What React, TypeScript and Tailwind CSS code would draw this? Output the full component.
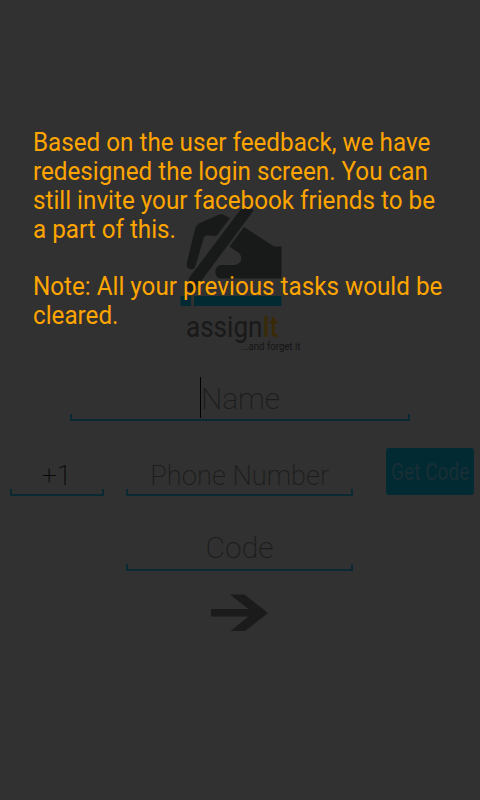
import type { ReactNode } from "react";

const notice = [
  "Based on the user feedback, we have",
  "redesigned the login screen. You can",
  "still invite your facebook friends to be",
  "a part of this.",
  "",
  "Note: All your previous tasks would be",
  "cleared.",
];

function Field({ className, children }: { className: string; children: ReactNode }) {
  return (
    <div className={`relative flex justify-center whitespace-nowrap ${className}`}>
      {children}
      <div className="absolute inset-x-0 bottom-0 h-[7px] border-x-2 border-b-2 border-[#0b2932]" />
    </div>
  );
}

function Logo() {
  return (
    <div className="ml-[180px] h-[152px] w-[124px]">
      <svg className="block h-[107px] w-[102px]" viewBox="180 200 102 107">
        <g fill="#181a19">
          <path d="M230 218 L223 214.5 Q221 213.8 218 215 L199 223.5 Q196 225 195 229 L187 262 Q186 268 190 269 Q194 270 195.500 266 L204 237 Q205 235.500 207 235.500 L216.500 236 Z" />
          <path d="M244 205 L254 210 L193 292 L187 291 L189 278 Z" />
          <path d="M244 227 L274 246.500 H281.500 V278.500 H221 C213 278 214 265 221 265 H233 C243 265 244 255 236 251 L229.500 246.500 Z" />
        </g>
        <path d="M180.500 296 H191 V306 H180.500 Z M194 296 H281.500 V306 H194 Z" fill="#022a33" />
      </svg>
      <div className="ml-[6px] mt-[3px] h-[31px] w-[104px] origin-left scale-x-[0.868] whitespace-nowrap text-[30px] leading-[34px] text-[#191919]">
        assign<span className="font-medium text-[#3a2a08]">It</span>
      </div>
      <div className="ml-[61px] h-[11px] w-[62px] origin-left scale-x-[0.96] whitespace-nowrap text-[10px] leading-[11px] text-[#151515]">...and forget it</div>
    </div>
  );
}

export default function App() {
  return (
    <main className="relative h-[800px] w-[480px] overflow-hidden bg-[#313131] pt-[200px] font-['Roboto',sans-serif]">
      <Logo />
      <div className="mt-[24px] flex justify-center">
        <Field className="h-[45px] w-[340px] text-[30px] font-extralight leading-[46px] text-[#1c1c1c]">
          <span className="mt-px h-[41px] w-px bg-black" />
          <span>Name</span>
        </Field>
      </div>
      <div className="mt-[26px] flex h-[49px] items-end pl-[10px]">
        <Field className="h-[49px] w-[94px] text-[28px] font-extralight leading-[58px] text-[#080808]">
          <span className="scale-x-[0.95]">+1</span>
        </Field>
        <Field className="ml-[22px] h-[49px] w-[227px] text-[28px] font-extralight leading-[58px] text-[#1c1c1c]">
          <span className="scale-x-[0.975]">Phone Number</span>
        </Field>
        <button className="mb-px ml-[33px] flex h-[47px] w-[88px] items-center justify-center whitespace-nowrap rounded-[3px] bg-[#022a33] pt-[3px] text-[23px] text-[#192f35]">
          <span className="scale-x-[0.83]">Get Code</span>
        </button>
      </div>
      <div className="mt-[26px] flex justify-center pr-[1px]">
        <Field className="h-[49px] w-[227px] text-[30px] font-extralight leading-[52px] text-[#1c1c1c]">Code</Field>
      </div>
      <svg className="ml-[211px] mt-[23px] block h-[38px] w-[58px]" viewBox="211 594 58 38">
        <path d="M211 609 H248.500 L230 594.500 H244.500 L268 613 L245 631 H230.500 L248.500 616.500 H211 Z" fill="#1b1b1b" />
      </svg>
      <div className="absolute left-[33px] top-[128px] origin-left scale-x-[0.969] text-[25px] leading-[29px] text-[#ffa500]">
        {notice.map((line, i) => (
          <p key={i} className={line ? "h-[29px] whitespace-nowrap" : "h-[28px]"}>{line}</p>
        ))}
      </div>
    </main>
  );
}
